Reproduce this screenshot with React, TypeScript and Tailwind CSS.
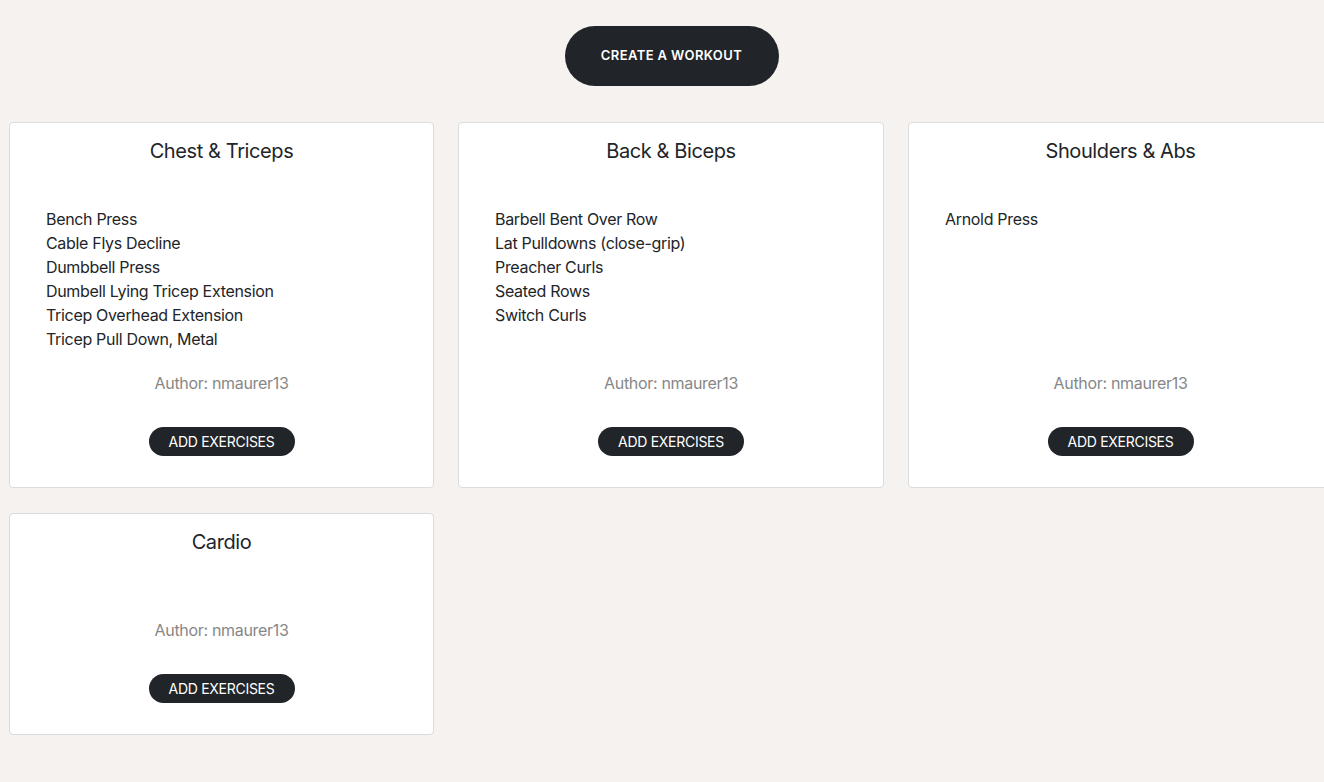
import React from "react";

type Workout = {
  title: string;
  exercises: string[];
  author: string;
};

const WORKOUTS: Workout[] = [
  {
    title: "Chest & Triceps",
    exercises: [
      "Bench Press",
      "Cable Flys Decline",
      "Dumbbell Press",
      "Dumbell Lying Tricep Extension",
      "Tricep Overhead Extension",
      "Tricep Pull Down, Metal",
    ],
    author: "nmaurer13",
  },
  {
    title: "Back & Biceps",
    exercises: [
      "Barbell Bent Over Row",
      "Lat Pulldowns (close-grip)",
      "Preacher Curls",
      "Seated Rows",
      "Switch Curls",
    ],
    author: "nmaurer13",
  },
  {
    title: "Shoulders & Abs",
    exercises: ["Arnold Press"],
    author: "nmaurer13",
  },
  {
    title: "Cardio",
    exercises: [],
    author: "nmaurer13",
  },
];

function WorkoutCard({ workout }: { workout: Workout }) {
  return (
    <div className="flex flex-col rounded-[4px] border border-[#dcdcdc] bg-white px-4 pt-4 pb-[31px]">
      <h5 className="text-center text-[20px] leading-[24px] font-normal tracking-[-0.02em] text-[#212529]">
        {workout.title}
      </h5>
      <ul className="mt-[44px] flex-1 pl-5">
        {workout.exercises.map((ex) => (
          <li key={ex} className="text-base leading-6 tracking-[-0.02em] text-[#212529]">
            {ex}
          </li>
        ))}
      </ul>
      <p className="mt-5 text-center text-base leading-6 tracking-[-0.02em] text-[#878787]">
        Author: {workout.author}
      </p>
      <div className="mt-8 flex justify-center">
        <button
          type="button"
          className="h-[29px] w-[146px] rounded-full bg-[#212529] text-[14px] font-normal leading-none tracking-[-0.02em] text-white"
        >
          ADD EXERCISES
        </button>
      </div>
    </div>
  );
}

export default function App() {
  return (
    <div className="min-h-[782px] overflow-hidden bg-[#f5f2ef] font-['Inter',sans-serif] antialiased">
      <div className="w-[1343px]">
        <div className="flex justify-center pt-[26px]">
          <button
            type="button"
            className="h-[60px] w-[214px] rounded-full bg-[#212529] text-[13px] font-semibold tracking-[0.03em] text-white"
          >
            CREATE A WORKOUT
          </button>
        </div>
        <div className="grid grid-cols-[425px_426px_425px] gap-x-6 gap-y-[25px] px-[9px] pt-9">
          {WORKOUTS.map((w) => (
            <WorkoutCard key={w.title} workout={w} />
          ))}
        </div>
      </div>
    </div>
  );
}
